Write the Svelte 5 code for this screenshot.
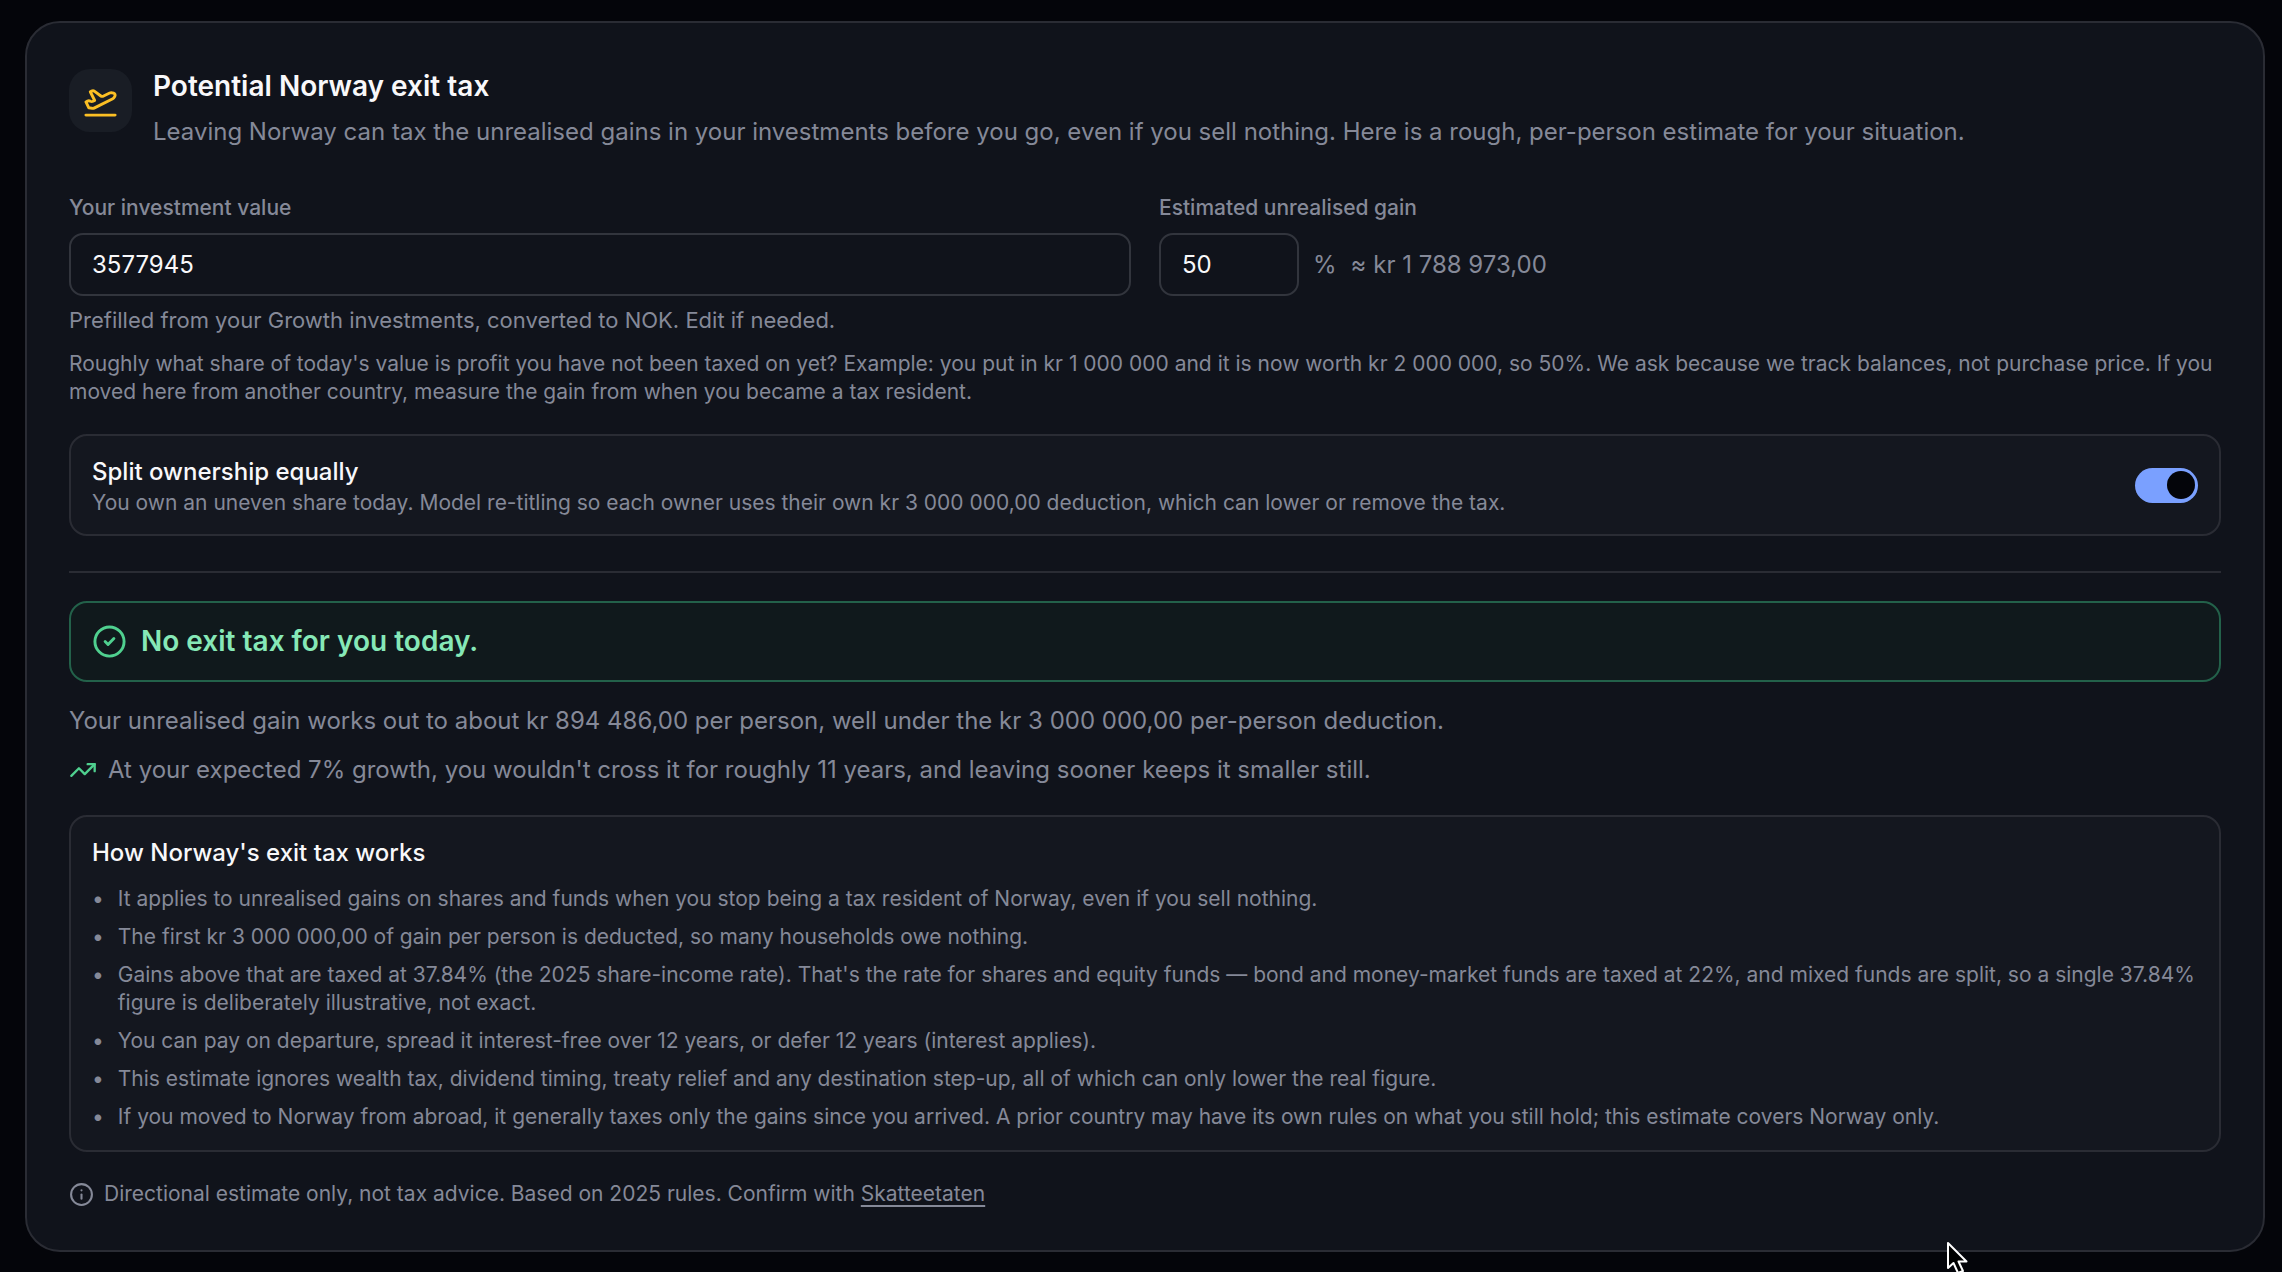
<script lang="ts">
  const DEDUCTION = 3_000_000
  const OWNERS = 2

  let investmentValue = $state('3577945')
  let gainPercent = $state('50')
  let splitEqually = $state(true)

  // "kr 3 000 000,00", with non-breaking spaces between the groups
  function formatKr(amount: number, decimals = true): string {
    const grouped = String(Math.round(amount)).replace(/\B(?=(\d{3})+$)/g, '\u00a0')
    return `kr\u00a0${grouped}${decimals ? ',00' : ''}`
  }

  let gain = $derived((Number(investmentValue) || 0) * (Number(gainPercent) || 0) / 100)
  let gainPerPerson = $derived(gain / OWNERS)

  const facts = [
    'It applies to unrealised gains on shares and funds when you stop being a tax resident of Norway, even if you sell nothing.',
    `The first ${formatKr(DEDUCTION)} of gain per person is deducted, so many households owe nothing.`,
    "Gains above that are taxed at 37.84% (the 2025 share-income rate). That's the rate for shares and equity funds — bond and money-market funds are taxed at 22%, and mixed funds are split, so a single 37.84% figure is deliberately illustrative, not exact.",
    'You can pay on departure, spread it interest-free over 12 years, or defer 12 years (interest applies).',
    'This estimate ignores wealth tax, dividend timing, treaty relief and any destination step-up, all of which can only lower the real figure.',
    'If you moved to Norway from abroad, it generally taxes only the gains since you arrived. A prior country may have its own rules on what you still hold; this estimate covers Norway only.',
  ]
</script>

<main class="card">
  <header>
    <div class="badge">
      <svg class="icon" viewBox="0 0 24 24">
        <path d="M2 22h20" />
        <path d="M6.36 17.4 4 17l-2-4 1.1-.55a2 2 0 0 1 1.8 0l.17.1a2 2 0 0 0 1.8 0L8 12 5 6l.9-.45a2 2 0 0 1 2.09.2l4.02 3a2 2 0 0 0 2.1.2l4.19-2.06a2.41 2.41 0 0 1 1.73-.17L21 7a1.4 1.4 0 0 1 .87 1.99l-.38.76c-.23.46-.6.84-1.07 1.08L7.58 17.2a2 2 0 0 1-1.22.18Z" />
      </svg>
    </div>
    <div>
      <h1>Potential Norway exit tax</h1>
      <p class="lead">Leaving Norway can tax the unrealised gains in your investments before you go, even if you sell nothing. Here is a rough, per-person estimate for your situation.</p>
    </div>
  </header>

  <div class="fields">
    <div class="field">
      <label for="value">Your investment value</label>
      <input id="value" class="box" type="text" inputmode="numeric" bind:value={investmentValue} />
      <p class="hint">Prefilled from your Growth investments, converted to NOK. Edit if needed.</p>
    </div>
    <div class="field">
      <label for="gain">Estimated unrealised gain</label>
      <div class="gain">
        <input id="gain" class="box narrow" type="text" inputmode="numeric" bind:value={gainPercent} />
        <span>%</span>
        <span>≈ {formatKr(gain)}</span>
      </div>
    </div>
  </div>
  <p class="small explain">Roughly what share of today's value is profit you have not been taxed on yet? Example: you put in {formatKr(1_000_000, false)} and it is now worth {formatKr(2_000_000, false)}, so 50%. We ask because we track balances, not purchase price. If you moved here from another country, measure the gain from when you became a tax resident.</p>

  <div class="panel split">
    <div>
      <label class="title" for="split">Split ownership equally</label>
      <p class="small">You own an uneven share today. Model re-titling so each owner uses their own {formatKr(DEDUCTION)} deduction, which can lower or remove the tax.</p>
    </div>
    <input id="split" class="switch" type="checkbox" role="switch" bind:checked={splitEqually} />
  </div>

  <hr />

  <div class="verdict">
    <svg class="icon" viewBox="0 0 24 24">
      <circle cx="12" cy="12" r="10" />
      <path d="m9 12 2 2 4-4" />
    </svg>
    <h2>No exit tax for you today.</h2>
  </div>

  <p class="result">Your unrealised gain works out to about {formatKr(gainPerPerson)} per person, well under the {formatKr(DEDUCTION)} per-person deduction.</p>
  <p class="growth">
    <svg class="icon" viewBox="0 0 24 24">
      <path d="M16 7h6v6" />
      <path d="m22 7-8.500 8.500-5-5L2 17" />
    </svg>
    <span>At your expected 7% growth, you wouldn't cross it for roughly 11 years, and leaving sooner keeps it smaller still.</span>
  </p>

  <section class="panel">
    <h3 class="title">How Norway's exit tax works</h3>
    <ul class="small">
      {#each facts as fact}
        <li>{fact}</li>
      {/each}
    </ul>
  </section>

  <footer class="small">
    <svg class="icon" viewBox="0 0 24 24">
      <circle cx="12" cy="12" r="10" />
      <path d="M12 16v-4" />
      <path d="M12 8h.01" />
    </svg>
    <span>Directional estimate only, not tax advice. Based on 2025 rules. Confirm with <a href="https://www.skatteetaten.no">Skatteetaten</a></span>
  </footer>
</main>

<svg class="pointer" viewBox="0 0 24 34" aria-hidden="true">
  <path d="M2 2v25l5.500-5 4.500 10 5-2-4.500-9.500h8Z" />
</svg>

<style>
  :global(body) {
    background: #04050a;
    overflow: hidden;
  }
  :global(#app) {
    padding: 21px 17px 20px 25px;
  }
  .card {
    box-sizing: border-box;
    padding: 46px 42px 42px;
    border: 2px solid #2a2c34;
    border-radius: 35px;
    background: #10131b;
    color: #858998;
    font: 400 24px/35px Inter, sans-serif;
    font-optical-sizing: none;
  }
  h1, h2, h3, p, ul { margin: 0; }
  .icon {
    flex-shrink: 0;
    fill: none;
    stroke: currentColor;
    stroke-width: 2;
    stroke-linecap: round;
    stroke-linejoin: round;
  }

  header {
    display: flex;
    gap: 21px;
    margin-bottom: 42px;
  }
  .badge {
    display: flex;
    align-items: center;
    justify-content: center;
    flex-shrink: 0;
    width: 63px;
    height: 63px;
    border-radius: 21px;
    background: #191d25;
    color: #fbbf24;
  }
  .badge .icon { width: 35px; height: 35px; }
  h1 {
    font-size: 28px;
    font-weight: 600;
    line-height: 35px;
    color: #f8f8fa;
  }
  .lead {
    margin-top: 8px;
    line-height: 40px;
  }

  .fields {
    display: grid;
    grid-template-columns: 1fr 1fr;
    gap: 28px;
  }
  .field {
    display: flex;
    flex-direction: column;
  }
  .field label {
    margin-bottom: 11px;
    font-size: 21px;
    font-weight: 500;
    line-height: 28px;
  }
  .box {
    box-sizing: border-box;
    width: 100%;
    height: 63px;
    padding: 0 21px;
    border: 2px solid #32353d;
    border-radius: 14px;
    background: transparent;
    color: #f8f8fa;
    font: inherit;
  }
  .gain {
    display: flex;
    align-items: center;
    gap: 14px;
  }
  .narrow { width: 140px; }
  .small {
    font-size: 21px;
    line-height: 28px;
  }
  .hint {
    margin-top: 10px;
    font-size: 22px;
    line-height: 28px;
  }
  .explain { margin: 16px 0 28px; }

  .panel {
    padding: 18px 21px 19px;
    border: 2px solid #2a2c34;
    border-radius: 18px;
    background: #14171f;
  }
  .title {
    display: block;
    font-size: 24px;
    font-weight: 500;
    line-height: 35px;
    color: #f8f8fa;
  }
  .split {
    display: flex;
    align-items: center;
    justify-content: space-between;
    gap: 28px;
    padding-bottom: 17px;
  }
  .switch {
    appearance: none;
    display: flex;
    flex-shrink: 0;
    width: 63px;
    height: 35px;
    margin: 0;
    padding: 3px;
    box-sizing: border-box;
    border-radius: 18px;
    background: #32363f;
  }
  .switch::before {
    content: '';
    width: 28px;
    height: 28px;
    border-radius: 50%;
    background: #04050a;
  }
  .switch:checked {
    justify-content: flex-end;
    background: #7aa0ff;
  }

  hr {
    height: 2px;
    margin: 35px 0 28px;
    border: 0;
    background: #2a2c34;
  }

  .verdict {
    display: flex;
    align-items: center;
    gap: 14px;
    margin-bottom: 21px;
    padding: 21px;
    border: 2px solid #23614a;
    border-radius: 18px;
    background: #10191c;
    color: #4fd08f;
  }
  .verdict .icon { width: 35px; height: 35px; }
  h2 {
    font-size: 28px;
    font-weight: 600;
    line-height: 35px;
    color: #86e8b7;
  }

  .growth {
    display: flex;
    align-items: center;
    gap: 11px;
    margin: 14px 0 28px;
  }
  .growth .icon {
    width: 28px;
    height: 28px;
    color: #4fd08f;
  }

  ul {
    display: flex;
    flex-direction: column;
    gap: 10px;
    margin-top: 15px;
    padding: 0;
    list-style: none;
  }
  li {
    display: flex;
    gap: 14px;
  }
  li::before { content: '•'; }

  footer {
    display: flex;
    align-items: center;
    gap: 10px;
    margin-top: 28px;
  }
  footer .icon { width: 25px; height: 25px; }
  a {
    color: inherit;
    text-decoration-thickness: 2px;
    text-underline-offset: 4px;
  }

  /* mouse pointer resting over the page */
  .pointer {
    position: fixed;
    right: 312px;
    bottom: -3px;
    width: 24px;
    height: 34px;
    fill: #000;
    stroke: #fff;
    stroke-width: 2;
    stroke-linejoin: round;
  }
</style>
